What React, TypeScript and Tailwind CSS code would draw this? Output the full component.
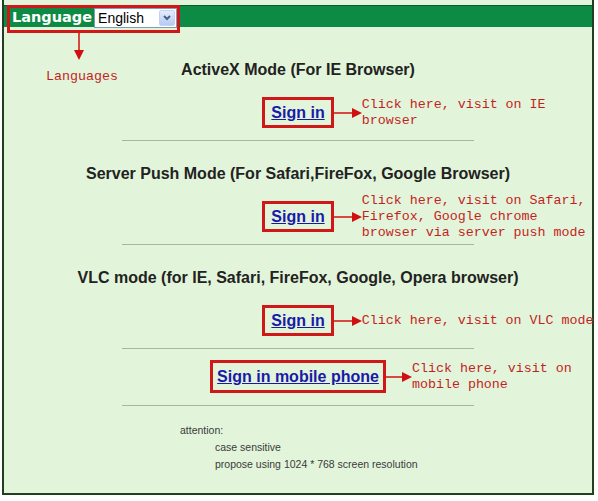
import React from 'react';

const RED = 'text-[#c41f1f]';

const Arrow: React.FC<{ width?: number }> = ({ width = 28 }) => (
    <svg width={width} height="12" viewBox={`0 0 ${width} 12`} className="shrink-0">
        <line x1="0" y1="6" x2={width - 9} y2="6" stroke="#d01010" strokeWidth="1.5" />
        <polygon points={`${width - 10},1 ${width},6 ${width - 10},11`} fill="#d01010" />
    </svg>
);

interface SignInProps {
    label: string;
    note: string[];
    tall?: boolean;
    gap?: number;
}

const SignIn: React.FC<SignInProps> = ({ label, note, tall, gap }) => (
    <div className="relative">
        <div className={`${tall ? 'h-[33px] px-[4px]' : 'h-[31px] px-[6px]'} border-[3px] border-[#d01818] flex items-center`}>
            <a href="#" className="text-[16px] font-bold underline text-[#1a1aa8] leading-none">
                {label}
            </a>
        </div>
        <div className="absolute left-full top-1/2 -translate-y-1/2 flex items-center">
            <Arrow width={gap} />
            <div className={`font-['Liberation_Mono',monospace] text-[13.33px] leading-[16px] whitespace-nowrap ${RED}`}>
                {note.map((l) => (
                    <div key={l}>{l}</div>
                ))}
            </div>
        </div>
    </div>
);

const Rule: React.FC = () => <div className="mt-[12px] w-[352px] h-px bg-[#a8b7a4]" />;

export default function App() {
    return (
        <div className="w-[598px] h-[501px] bg-white font-['Liberation_Sans',Arial,sans-serif]">
            <div className="relative ml-[2px] w-[592px] h-[495px] border-x-2 border-b-2 border-[#213f21] bg-[#e2f5da] pt-[5px]">
                {/* top bar */}
                <div className="h-[22px] bg-[#0d8a43] border-t border-[#0a5c2b] flex pl-[8px]">
                    <span className="font-['DejaVu_Sans',sans-serif] font-bold text-[14.5px] leading-[23px] text-white">
                        Language
                    </span>
                    <div className="ml-[2px] mt-[2px] h-[20px] w-[83px] bg-white flex items-center border border-[#7f9db9]">
                        <span className="pl-[3px] text-[14px] text-black">English</span>
                        <div className="ml-auto mr-px h-[16px] w-[16px] rounded-[2px] bg-gradient-to-b from-[#e3ecfd] to-[#b5cbf3] border border-[#c3d3f6] flex items-center justify-center">
                            <svg width="8" height="6" viewBox="0 0 8 6">
                                <path d="M1 1 L4 4 L7 1" stroke="#4d6185" strokeWidth="2" fill="none" />
                            </svg>
                        </div>
                    </div>
                </div>

                {/* language annotation */}
                <div className="absolute left-[3px] top-[5px] w-[173px] h-[28px] border-[3px] border-[#d01818]" />
                <svg className="absolute left-[69px] top-[33px]" width="12" height="28" viewBox="0 0 12 28">
                    <line x1="6" y1="0" x2="6" y2="18" stroke="#d01010" strokeWidth="1.5" />
                    <polygon points="1,17 11,17 6,27" fill="#d01010" />
                </svg>
                <div className={`absolute left-[42px] top-[69px] font-['Liberation_Mono',monospace] text-[13.33px] leading-[16px] ${RED}`}>
                    Languages
                </div>

                <div className="flex flex-col items-center text-[#222]">
                    <h2 className="mt-[33px] text-[16px] leading-[20px] font-bold">ActiveX Mode (For IE Browser)</h2>
                    <div className="mt-[17px]">
                        <SignIn label="Sign in" note={['Click here, visit on IE', 'browser']} />
                    </div>
                    <Rule />

                    <h2 className="mt-[23px] text-[16px] leading-[20px] font-bold">
                        Server Push Mode (For Safari,FireFox, Google Browser)
                    </h2>
                    <div className="mt-[17px]">
                        <SignIn
                            label="Sign in"
                            note={['Click here, visit on Safari,', 'Firefox, Google chrome', 'browser via server push mode']}
                        />
                    </div>
                    <Rule />

                    <h2 className="mt-[23px] text-[16px] leading-[20px] font-bold">
                        VLC mode (for IE, Safari, FireFox, Google, Opera browser)
                    </h2>
                    <div className="mt-[17px]">
                        <SignIn label="Sign in" note={['Click here, visit on VLC mode']} />
                    </div>
                    <Rule />

                    <div className="mt-[11px]">
                        <SignIn
                            label="Sign in mobile phone"
                            note={['Click here, visit on', 'mobile phone']}
                            tall
                            gap={26}
                        />
                    </div>
                    <Rule />

                    <div className="self-stretch mt-[16px] pl-[176px] text-[10.5px] leading-[17px] text-[#3a3a3a]">
                        <div>attention:</div>
                        <div className="pl-[35px]">case sensitive</div>
                        <div className="pl-[35px]">propose using 1024 * 768 screen resolution</div>
                    </div>
                </div>
            </div>
        </div>
    );
}
